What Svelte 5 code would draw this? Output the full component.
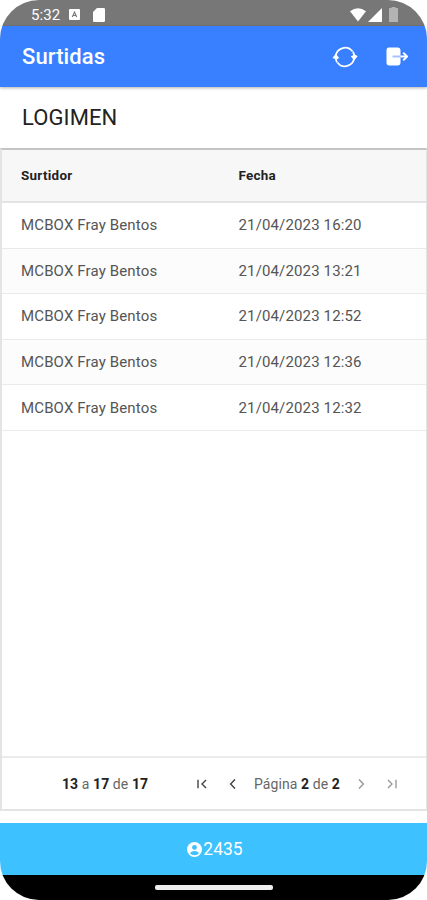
<script lang="ts">
    const rows = [
        { surtidor: "MCBOX Fray Bentos", fecha: "21/04/2023 16:20" },
        { surtidor: "MCBOX Fray Bentos", fecha: "21/04/2023 13:21" },
        { surtidor: "MCBOX Fray Bentos", fecha: "21/04/2023 12:52" },
        { surtidor: "MCBOX Fray Bentos", fecha: "21/04/2023 12:36" },
        { surtidor: "MCBOX Fray Bentos", fecha: "21/04/2023 12:32" },
    ];
</script>

<div class="phone">
    <div class="status">
        <span class="clock">5:32</span>
        <svg class="keyboard" width="11" height="11" viewBox="0 0 11 11">
            <rect width="11" height="11" rx="1" fill="#fff" />
            <path d="M3.3 8 5.5 3 7.7 8M4.2 6.5h2.6" fill="none" stroke="#777" stroke-width="1.1" />
        </svg>
        <svg class="card" width="12" height="14" viewBox="0 0 12 14">
            <path d="M4 0h6.7Q12 0 12 1.3v11.4q0 1.3-1.3 1.3H1.3Q0 14 0 12.7V4z" fill="#fff" />
        </svg>
        <span class="spacer"></span>
        <svg width="16" height="14" viewBox="0 0 16 14">
            <path d="M0 3.2Q8-2.5 16 3.2L8 13.5z" fill="#fff" />
        </svg>
        <svg class="signal" width="14" height="14" viewBox="0 0 14 14">
            <path d="M14 0v14H0z" fill="#fff" />
        </svg>
        <svg class="battery" width="9" height="15" viewBox="0 0 9 15">
            <path d="M0 1h2.5V0h4v1H9v14H0z" fill="#b3b3b3" />
        </svg>
    </div>

    <header>
        <h1>Surtidas</h1>
        <button aria-label="Actualizar">
            <svg width="26" height="22" viewBox="0 0 26 22" fill="none" stroke="#fff" stroke-width="1.7">
                <path d="M3.7 11.5A9.4 9.4 0 0 1 20.6 5.6M22.3 10.5A9.4 9.4 0 0 1 5.4 16.4" />
                <path d="M21 5.8Q22.3 8 22.3 11M5 16.2Q3.7 14 3.7 11" />
                <path d="M.4 12 3.8 7.8 7.2 12 4.6 13.5zM18.8 10.2l3.4 4.2 3.4-4.2-2.6-1.7z" fill="#fff" stroke="none" />
            </svg>
        </button>
        <button class="exit" aria-label="Salir">
            <svg width="22" height="19" viewBox="0 0 22 19">
                <path d="M3 .5h8.5q3 0 3 3v12q0 3-3 3H3q-2.5 0-2.5-3v-12q0-3 2.5-3z" fill="#fff" />
                <path d="M6.5 9.5h8" stroke="#a3c3ff" stroke-width="2" />
                <path d="M14.5 9.5H20" stroke="#fff" stroke-width="1.8" />
                <path d="M17.2 5.6 21 9.5l-3.8 3.9" fill="none" stroke="#fff" stroke-width="2" stroke-linejoin="round" />
            </svg>
        </button>
    </header>

    <h2>LOGIMEN</h2>

    <div class="grid">
        <div class="row head">
            <span>Surtidor</span>
            <span>Fecha</span>
        </div>
        <div class="body">
            {#each rows as row}
                <div class="row">
                    <span>{row.surtidor}</span>
                    <span>{row.fecha}</span>
                </div>
            {/each}
        </div>
        <div class="pager">
            <span class="summary"><b>13</b> a <b>17</b> de <b>17</b></span>
            <svg class="first" width="10" height="10" viewBox="0 0 10 10">
                <path d="M1 .8v8.4M9 1 5 5l4 4" />
            </svg>
            <svg class="previous" width="7" height="10" viewBox="0 0 7 10">
                <path d="M6 .4 1.6 5 6 9.6" />
            </svg>
            <span class="page">Página <b>2</b> de <b>2</b></span>
            <svg class="next off" width="7" height="10" viewBox="0 0 7 10">
                <path d="M1 .4 5.4 5 1 9.6" />
            </svg>
            <svg class="last off" width="10" height="10" viewBox="0 0 10 10">
                <path d="M9 .8v8.4M1 1l4 4-4 4" />
            </svg>
        </div>
    </div>

    <footer>
        <svg width="15" height="15" viewBox="0 0 15 15">
            <circle cx="7.5" cy="7.5" r="7.5" fill="#fff" />
            <circle cx="7.5" cy="5.4" r="2.4" fill="#3dc2ff" />
            <path d="M3 11.2Q4.3 9 7.5 9t4.5 2.2Q10.3 13.3 7.5 13.3T3 11.2z" fill="#3dc2ff" />
        </svg>
        <span>2435</span>
    </footer>

    <div class="gesture"><i></i></div>
</div>

<style>
    :global(body) {
        margin: 0;
        background: #fff;
    }

    .phone {
        display: flex;
        flex-direction: column;
        width: 427px;
        height: 900px;
        border-radius: 39px;
        overflow: hidden;
        background: #fff;
        font-family: Roboto, sans-serif;
    }

    .status {
        display: flex;
        align-items: center;
        flex: none;
        box-sizing: border-box;
        height: 26px;
        padding: 3px 29px 0 31px;
        background: #777;
        color: #fff;
    }

    .clock {
        width: 38px;
        font-size: 15px;
        letter-spacing: 0.1px;
    }

    .card {
        margin-left: 13px;
    }

    .spacer {
        flex: 1;
    }

    .signal {
        margin-left: 2px;
    }

    .battery {
        margin-left: 7px;
    }

    header {
        display: flex;
        align-items: center;
        flex: none;
        box-sizing: border-box;
        height: 61px;
        padding: 0 19px 0 22px;
        background: #3880ff;
        color: #fff;
        box-shadow: 0 1px 3px rgba(0, 0, 0, 0.3);
    }

    h1 {
        flex: 1;
        margin: 0;
        font-size: 22px;
        font-weight: 500;
        letter-spacing: 0.1px;
    }

    button {
        display: flex;
        padding: 0;
        border: 0;
        background: none;
    }

    .exit {
        margin-left: 28px;
    }

    h2 {
        flex: none;
        box-sizing: border-box;
        height: 61px;
        margin: 0;
        padding-left: 22px;
        font-size: 22px;
        font-weight: 400;
        line-height: 61px;
        letter-spacing: 0.1px;
        color: #222;
    }

    .grid {
        display: flex;
        flex-direction: column;
        flex: none;
        box-sizing: border-box;
        height: 663px;
        border: 2px solid #e4e4e4;
        border-top-color: #c4c4c4;
        border-right-width: 1px;
    }

    .row {
        display: grid;
        grid-template-columns: 217.5px 1fr;
        align-items: center;
        box-sizing: border-box;
        height: 45.6px;
        padding-left: 19px;
        border-bottom: 1px solid #e8eaeb;
        font-size: 15px;
        letter-spacing: 0.14px;
        color: #555;
    }

    .body {
        flex: 1;
    }

    .body .row:nth-child(even) {
        background: #fcfcfc;
    }

    .head {
        height: 53px;
        border-bottom: 2px solid #e2e4e5;
        background: #f7f7f7;
        font-size: 13.4px;
        letter-spacing: 0.3px;
        font-weight: 700;
        color: #222;
    }

    .pager {
        display: flex;
        align-items: center;
        box-sizing: border-box;
        height: 53px;
        padding-left: 60px;
        border-top: 2px solid #ebebeb;
        font-size: 14px;
        letter-spacing: 0.08px;
        color: #666;
    }

    .pager b {
        color: #222;
    }

    .pager svg {
        fill: none;
        stroke: #444;
        stroke-width: 1.4;
    }

    .pager .off {
        stroke: #999;
    }

    .summary {
        width: 135px;
    }

    .previous {
        margin-left: 22px;
    }

    .page {
        width: 86px;
        margin-left: 18px;
        white-space: nowrap;
    }

    .next {
        margin-left: 18px;
    }

    .last {
        margin-left: 22px;
    }

    footer {
        display: flex;
        align-items: center;
        justify-content: center;
        flex: none;
        gap: 1px;
        height: 52px;
        margin-top: 12px;
        padding-left: 3px;
        background: #3dc2ff;
        color: #fff;
        font-size: 17.5px;
    }

    .gesture {
        display: flex;
        align-items: center;
        justify-content: center;
        flex: 1;
        background: #000;
    }

    .gesture i {
        width: 118px;
        height: 5px;
        border-radius: 2px;
        background: #eee;
    }
</style>
